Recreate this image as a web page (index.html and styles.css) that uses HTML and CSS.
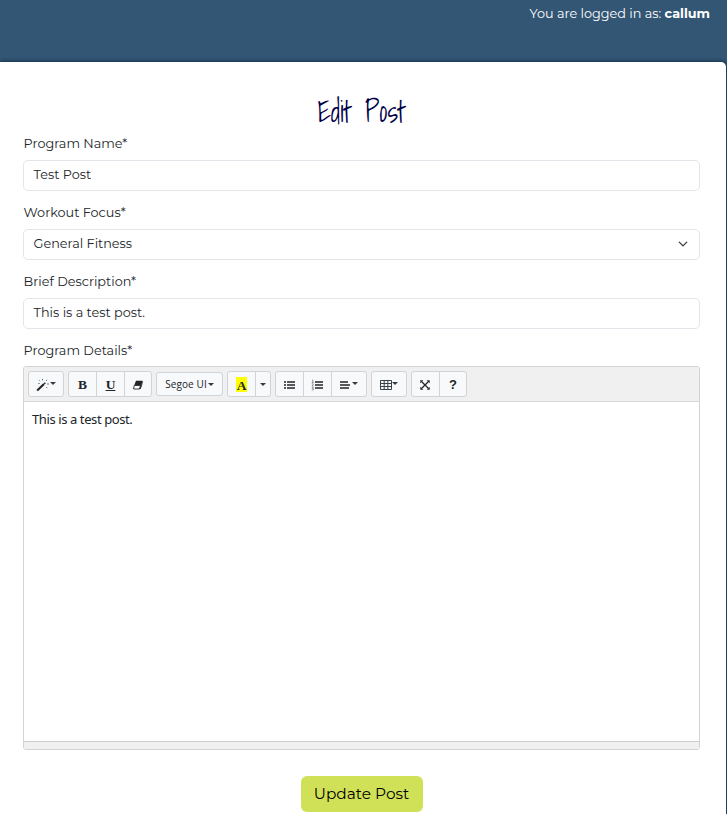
FILE: index.html
```html
<!DOCTYPE html>
<html lang="en">
<head>
<meta charset="utf-8">
<title>Edit Post</title>
<link rel="stylesheet" href="styles.css">
</head>
<body>
<header class="topbar">You are logged in as: <strong>callum</strong></header>
<main class="card">
  <h1>Edit Post</h1>
  <form>
    <label>Program Name*</label>
    <div class="field">Test Post</div>
    <label>Workout Focus*</label>
    <div class="field">General Fitness
      <svg width="12" height="12" viewBox="0 0 16 16"><path d="m3 5.5 5 5 5-5" fill="none" stroke="#343a40" stroke-width="1.8" stroke-linecap="round" stroke-linejoin="round"/></svg>
    </div>
    <label>Brief Description*</label>
    <div class="field">This is a test post.</div>
    <label>Program Details*</label>
    <section class="editor">
      <div class="toolbar">
        <div class="group"><div class="btn w36">
          <svg width="14" height="14" viewBox="0 0 14 14"><path d="M1.2 12.6 8 6" stroke="#212529" stroke-width="2.1"/><path d="m8.2 5.8 1.1-1.1" stroke="#212529" stroke-width="1.6"/><path d="M6.5.8v1.7M3 2.2l1 1M11 1.8l-1 1.2M2.2 5.5h1.5M11 6h2M10.2 9l1 1.2" stroke="#647d8d" stroke-width="1"/></svg><i class="caret"></i></div></div>
        <div class="group">
          <div class="btn w28 serif">B</div>
          <div class="btn w28 serif under">U</div>
          <div class="btn w27"><svg width="10" height="10" viewBox="0 0 10 10"><path d="M3 .7h6.5L8 5.3H1.3z" fill="#212529"/><path d="M1.2 5.5h6.4L6.6 9H.6zM9.3 1.5 7.6 5.5 6.8 9l1.7-2.8z" fill="#fff" stroke="#212529" stroke-width=".9"/></svg></div>
        </div>
        <div class="group font-group"><div class="btn font"><span>Segoe UI</span><i class="caret"></i></div></div>
        <div class="group"><div class="btn w28 serif mark"><span class="hl">A</span></div><div class="btn w16"><i class="caret"></i></div></div>
        <div class="group">
          <div class="btn w28"><svg width="12" height="10" viewBox="0 0 12 10"><path d="M4 2h8M4 5h8M4 8h8" stroke="#212529" stroke-width="1.7"/><path d="M1 2h2M1 5h2M1 8h2" stroke="#212529" stroke-width="1.7"/></svg></div>
          <div class="btn w28"><svg width="12" height="12" viewBox="0 0 12 12"><path d="M4 3h8M4 6h8M4 9h8" stroke="#212529" stroke-width="1.7"/><path d="M1 1h.8v2.4M.7 3.5h2M.8 4.8h1.4v1L.9 7h1.8M.8 8.5h1.5l-.8 1.1h.8V11H.7" fill="none" stroke="#53606a" stroke-width=".6"/></svg></div>
          <div class="btn w36"><svg width="11" height="10" viewBox="0 0 11 10"><path d="M0 2h8M0 5h10M0 8h9" stroke="#212529" stroke-width="1.7"/></svg><i class="caret"></i></div>
        </div>
        <div class="group"><div class="btn w36"><svg width="12" height="10" viewBox="0 0 12 10"><path d="M.5.5h11v9H.5zM.5 3.5h11M.5 6.5h11M4.2.5v9M7.8.5v9" fill="none" stroke="#394047" stroke-width="1"/></svg><i class="caret"></i></div></div>
        <div class="group">
          <div class="btn w28"><svg width="10" height="10" viewBox="0 0 10 10"><path d="m1.5 1.5 7 7m0-7-7 7" stroke="#212529" stroke-width="1.3"/><path d="M.3.3h3l-3 3zM9.7.3v3l-3-3zM.3 9.7v-3l3 3zM9.7 9.7h-3l3-3z" fill="#212529"/></svg></div>
          <div class="btn w27 help">?</div>
        </div>
      </div>
      <div class="content">This is a test post.</div>
      <div class="status"></div>
    </section>
    <button type="button">Update Post</button>
  </form>
</main>
</body>
</html>
```
FILE: styles.css
```css
* { box-sizing: border-box; }
body { margin: 0; height: 814px; overflow: hidden; background: #335674; color: #212529; font: 12.8px/20px Montserrat, Inter, sans-serif; }
.topbar { height: 62px; padding: 4px 17px 0 0; text-align: right; color: #fff; }
.card { width: 726px; height: 760px; padding: 30px 26px 0 23px; background: #fff; border-radius: 0 5px 0 0; box-shadow: 0 0 4px #061f38; }
h1 { height: 42px; margin: 0; text-align: center; font: 400 29px/40px "Shadows Into Light", "Open Sans", sans-serif; color: #000047; }
form { display: flex; flex-direction: column; }
label { height: 20px; margin-bottom: 6px; padding-left: .6px; }
.field { display: flex; align-items: center; justify-content: space-between; height: 31px; margin-bottom: 12px; padding: 0 10px 1px 9.6px; border: 1px solid #e2e6ea; border-radius: 5px; white-space: nowrap; }
.editor { height: 384px; margin-top: -1px; border: 1px solid #d3d3d3; border-radius: 3px; display: flex; flex-direction: column; overflow: hidden; }
.toolbar { display: flex; gap: 4px; height: 35px; padding: 4px; background: #f0f0f0; border-bottom: 1px solid #d9d9d9; }
.group { display: flex; height: 26px; border: 1px solid #ced4da; border-radius: 3px; background: #f8f9fa; }
.font-group { height: 24px; margin-top: 1px; }
.btn { display: flex; align-items: center; justify-content: center; height: 24px; padding-top: 1px; }
.btn svg { display: block; flex: none; position: relative; top: .5px; left: -.5px; }
.btn + .btn { border-left: 1px solid #ced4da; }
.w36 { width: 34px; }
.w27, .w28 { width: 27px; }
.w28 + .w28 { width: 28px; }
.w28 + .w36 { width: 35px; }
.w16 { width: 15px; }
.font { width: 65px; height: 22px; padding-top: 0; font: 10px/14px "Open Sans", sans-serif; letter-spacing: .1px; }
.caret { border: 3px solid transparent; border-top-color: #343a40; border-bottom: 0; margin: 0 0 2px; }
.font .caret { margin: 0 0 0 1px; }
.w16 .caret { margin: 0; }
.serif { font: bold 13.5px/14px "Liberation Serif", serif; padding-top: 2px; }
.serif.mark { padding-top: 0; }
.under { text-decoration: underline; text-decoration-thickness: 1px; text-underline-offset: 1px; }
.hl { width: 11px; height: 15px; background: #ff0; text-align: center; line-height: 17px; }
.help { font: bold 13px/14px "Liberation Sans", sans-serif; padding-top: 2px; }
.content { flex: 1; padding: 8px; font: 13px/19px "Noto Sans", sans-serif; letter-spacing: -.4px; }
.status { height: 8px; background: #f0f0f0; border-top: 1px solid #ccc; }
button { align-self: center; width: 122px; height: 36px; margin-top: 25.5px; padding: 1px 0 0; border: 0; border-radius: 6px; background: #d0e057; color: #000; font: 15.36px/24px Montserrat, Inter, sans-serif; }
```
